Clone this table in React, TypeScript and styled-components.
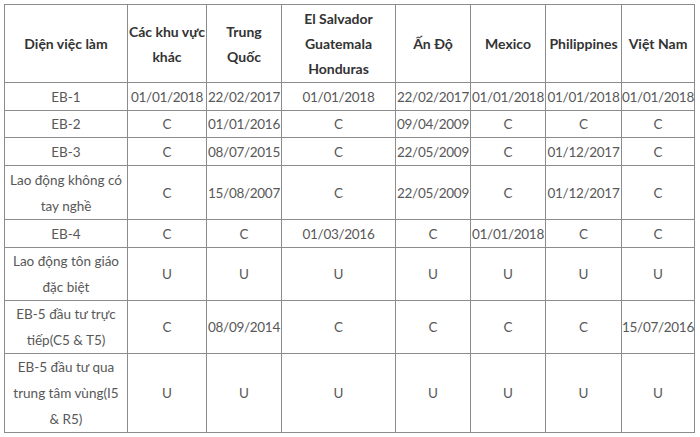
import React from "react";
import styled, { createGlobalStyle } from "styled-components";

const Global = createGlobalStyle`
  html, body { margin: 0; padding: 0; background: #ffffff; }
  body { font-family: Lato, "Noto Sans", sans-serif; }
`;

const Page = styled.div`
  width: 700px;
  height: 437px;
  padding: 4px 0 0 4px;
  box-sizing: border-box;
  background: #fff;
`;

const Table = styled.table`
  border-collapse: collapse;
  table-layout: fixed;
  width: 690px;
  border: 1px solid #7a7a7a;
  font-size: 13.5px;
  line-height: 26px;
  color: #585858;
`;

const Row = styled.tr<{ $h: number }>`
  height: ${(p) => p.$h}px;
`;

const HeadCell = styled.th`
  border: 1px solid #8c8c8c;
  padding: 0;
  font-size: 14px;
  line-height: 25px;
  font-weight: 700;
  color: #333;
  text-align: center;
  vertical-align: middle;
`;

const Cell = styled.td<{ $date?: boolean }>`
  border: 1px solid #8c8c8c;
  padding: 0;
  text-align: center;
  vertical-align: middle;
  white-space: nowrap;
  overflow: hidden;
  letter-spacing: ${(p) => (p.$date ? "-0.3px" : "0")};
`;

const widths = [123, 79, 75, 114, 75, 75, 76, 73];

const headers: React.ReactNode[] = [
  "Diện việc làm",
  <>Các khu vực<br />khác</>,
  <>Trung<br />Quốc</>,
  <>El Salvador<br />Guatemala<br />Honduras</>,
  "Ấn Độ",
  "Mexico",
  "Philippines",
  "Việt Nam",
];

type RowData = { label: React.ReactNode; h: number; vals: string[] };

const rows: RowData[] = [
  { label: "EB-1", h: 28, vals: ["01/01/2018", "22/02/2017", "01/01/2018", "22/02/2017", "01/01/2018", "01/01/2018", "01/01/2018"] },
  { label: "EB-2", h: 27, vals: ["C", "01/01/2016", "C", "09/04/2009", "C", "C", "C"] },
  { label: "EB-3", h: 28, vals: ["C", "08/07/2015", "C", "22/05/2009", "C", "01/12/2017", "C"] },
  { label: <>Lao động không có<br />tay nghề</>, h: 54, vals: ["C", "15/08/2007", "C", "22/05/2009", "C", "01/12/2017", "C"] },
  { label: "EB-4", h: 28, vals: ["C", "C", "01/03/2016", "C", "01/01/2018", "C", "C"] },
  { label: <>Lao động tôn giáo<br />đặc biệt</>, h: 53, vals: ["U", "U", "U", "U", "U", "U", "U"] },
  { label: <>EB-5 đầu tư trực<br />tiếp(C5 &amp; T5)</>, h: 53, vals: ["C", "08/09/2014", "C", "C", "C", "C", "15/07/2016"] },
  { label: <>EB-5 đầu tư qua<br />trung tâm vùng(I5<br />&amp; R5)</>, h: 79, vals: ["U", "U", "U", "U", "U", "U", "U"] },
];

export default function App() {
  return (
    <>
      <Global />
      <Page>
        <Table>
          <colgroup>
            {widths.map((w, i) => (
              <col key={i} style={{ width: w }} />
            ))}
          </colgroup>
          <thead>
            <Row $h={78}>
              {headers.map((h, i) => (
                <HeadCell key={i}>{h}</HeadCell>
              ))}
            </Row>
          </thead>
          <tbody>
            {rows.map((r, i) => (
              <Row key={i} $h={r.h}>
                <Cell>{r.label}</Cell>
                {r.vals.map((v, j) => (
                  <Cell key={j} $date={v.length > 1}>{v}</Cell>
                ))}
              </Row>
            ))}
          </tbody>
        </Table>
      </Page>
    </>
  );
}
